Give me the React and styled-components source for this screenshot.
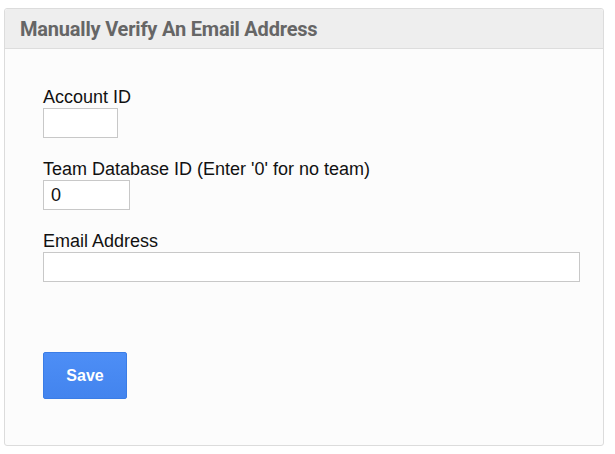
import styled, {createGlobalStyle} from "styled-components"

const Global = createGlobalStyle`
body{
  margin:0;
  background:#fff;
  font-family:"Liberation Sans", Arial, sans-serif;
}
`

const Page = styled.div`
  padding:8px 11px 8px 4px;
`

const Panel = styled.div`
  border:1px solid #dcdcdc;
  border-radius:3px;
  background:#fcfcfc;
  height:438px;
  box-sizing:border-box;
`

const Header = styled.div`
  background:#eeeeee;
  border-bottom:1px solid #dddddd;
  border-radius:3px 3px 0 0;
  height:39px;
  padding:0 15px;
  display:flex;
  align-items:center;
  h3{
    margin:0;
    font-family:Roboto, "Liberation Sans", sans-serif;
    font-weight:700;
    font-size:20px;
    color:#666;
    letter-spacing:-0.2px;
  }
`

const Form = styled.form`
  padding:38px 23px 0 38px;
  display:flex;
  flex-direction:column;
`

const Field = styled.div`
  display:flex;
  flex-direction:column;
  align-items:flex-start;
  margin-bottom:21px;
  label{
    font-size:18px;
    line-height:21px;
    color:#111;
  }
`

const Input = styled.input`
  box-sizing:border-box;
  width:${p => p.$w || "100%"};
  height:30px;
  border:1px solid #c8c8c8;
  background:#fff;
  font-family:"Liberation Sans", Arial, sans-serif;
  font-size:18px;
  padding:0 7px;
  color:#111;
  outline:none;
`

const Button = styled.button`
  margin-top:49px;
  align-self:flex-start;
  width:84px;
  height:47px;
  border:1px solid #3b7de6;
  border-radius:2px;
  background:linear-gradient(#4d8ef6, #4384ee);
  color:#fff;
  font-family:"Liberation Sans", Arial, sans-serif;
  font-weight:700;
  font-size:16px;
  cursor:pointer;
`

export default function App() {
  return (
    <>
      <Global/>
      <Page>
        <Panel>
          <Header><h3>Manually Verify An Email Address</h3></Header>
          <Form onSubmit={e => e.preventDefault()}>
            <Field>
              <label>Account ID</label>
              <Input $w="75px" />
            </Field>
            <Field>
              <label>Team Database ID (Enter '0' for no team)</label>
              <Input $w="87px" defaultValue="0" />
            </Field>
            <Field>
              <label>Email Address</label>
              <Input />
            </Field>
            <Button type="submit">Save</Button>
          </Form>
        </Panel>
      </Page>
    </>
  )
}
